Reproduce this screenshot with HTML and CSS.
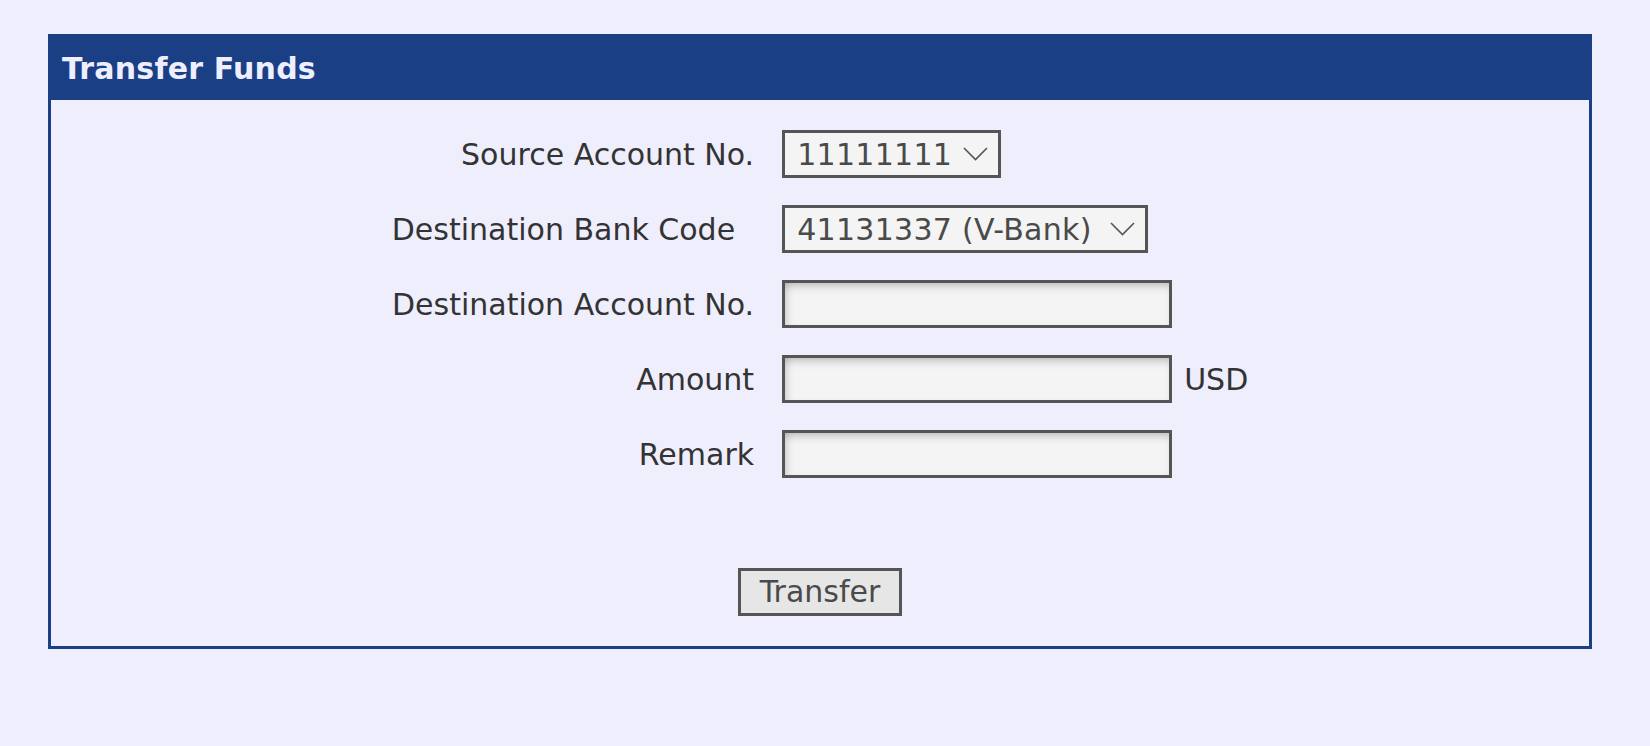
FILE: index.html
```html
<!DOCTYPE html>
<html>
<head>
<meta charset="utf-8">
<title>Transfer Funds</title>
<link rel="stylesheet" href="styles.css">
</head>
<body>
<div class="panel">
  <div class="panel-head">Transfer Funds</div>
  <form class="panel-body">
    <div class="form-grid">
      <label class="lbl" for="src">Source Account No.</label>
      <div class="field">
        <span class="sel-wrap">
          <select id="src" class="sel sel-src"><option>11111111</option></select>
          <svg class="chev" width="25" height="14" viewBox="0 0 25 14"><path d="M1 1 L12.5 12.5 L24 1" fill="none" stroke="#555" stroke-width="1.6"/></svg>
        </span>
      </div>
      <label class="lbl lbl-pad" for="bank">Destination Bank Code</label>
      <div class="field">
        <span class="sel-wrap">
          <select id="bank" class="sel sel-bank"><option>41131337 (V-Bank)</option></select>
          <svg class="chev" width="25" height="14" viewBox="0 0 25 14"><path d="M1 1 L12.5 12.5 L24 1" fill="none" stroke="#555" stroke-width="1.6"/></svg>
        </span>
      </div>
      <label class="lbl" for="dst">Destination Account No.</label>
      <div class="field"><input id="dst" class="txt" type="text"></div>
      <label class="lbl" for="amt">Amount</label>
      <div class="field"><input id="amt" class="txt" type="text"><span class="unit">USD</span></div>
      <label class="lbl" for="rem">Remark</label>
      <div class="field"><input id="rem" class="txt" type="text"></div>
    </div>
    <div class="actions"><button type="button" class="btn">Transfer</button></div>
  </form>
</div>
</body>
</html>
```
FILE: styles.css
```css
html, body {
  margin: 0;
  background: #efeefd;
}
body {
  padding: 34px 58px 0 48px;
  font-family: "DejaVu Sans", Verdana, sans-serif;
  font-size: 30px;
  color: #333;
}
.panel {
  border: 3px solid #1b3f85;
  background: #efeefd;
}
.panel-head {
  background: #1b3f85;
  color: #eeeeff;
  font-weight: bold;
  font-size: 30px;
  letter-spacing: 0.2px;
  height: 63px;
  line-height: 63px;
  padding-left: 11px;
}
.panel-body {
  margin: 0;
  padding: 30px 0 30px;
}
.form-grid {
  display: grid;
  grid-template-columns: auto auto;
  justify-content: center;
  column-gap: 28px;
  row-gap: 27px;
  align-items: center;
}
.lbl {
  text-align: right;
  color: #333;
  line-height: 50px;
  height: 48px;
}
.lbl-pad {
  padding-right: 19px;
}
.field {
  display: flex;
  align-items: center;
  height: 48px;
}
.sel-wrap {
  position: relative;
  display: inline-block;
}
.sel {
  -webkit-appearance: none;
  appearance: none;
  font-family: "DejaVu Sans", Verdana, sans-serif;
  font-size: 30px;
  letter-spacing: 0.3px;
  color: #4a4a4a;
  background: #f4f4f4;
  border: 3px solid #555;
  border-radius: 0;
  height: 48px;
  box-sizing: border-box;
  padding: 0 40px 0 12px;
  margin: 0;
  outline: none;
  display: block;
}
.sel-src {
  width: 219px;
}
.sel-bank {
  width: 366px;
}
.chev {
  position: absolute;
  right: 13px;
  top: 17px;
  pointer-events: none;
}
.txt {
  width: 390px;
  height: 48px;
  box-sizing: border-box;
  border: 3px solid #555;
  border-radius: 0;
  background: #f4f4f4;
  box-shadow: inset 0 7px 8px -4px rgba(0, 0, 0, 0.22), inset 7px 0 8px -5px rgba(0, 0, 0, 0.14);
  font-family: "DejaVu Sans", Verdana, sans-serif;
  font-size: 30px;
  margin: 0;
  padding: 0 8px;
  outline: none;
}
.unit {
  margin-left: 12px;
  color: #333;
}
.actions {
  display: flex;
  justify-content: center;
  margin-top: 90px;
}
.btn {
  font-family: "DejaVu Sans", Verdana, sans-serif;
  font-size: 30px;
  color: #4a4a4a;
  background: #e6e6e6;
  border: 3px solid #555;
  border-radius: 0;
  height: 48px;
  width: 164px;
  padding: 0;
  margin: 0;
  line-height: 1;
}
```
